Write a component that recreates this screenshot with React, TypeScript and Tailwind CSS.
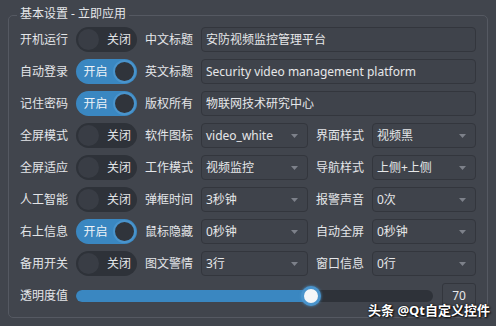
type Cell = { label: string; value: string };

type Row = {
  label: string;
  on: boolean;
  second: Cell;
  third?: Cell;
};

const rows: Row[] = [
  { label: "开机运行", on: false, second: { label: "中文标题", value: "安防视频监控管理平台" } },
  { label: "自动登录", on: true, second: { label: "英文标题", value: "Security video management platform" } },
  { label: "记住密码", on: true, second: { label: "版权所有", value: "物联网技术研究中心" } },
  {
    label: "全屏模式",
    on: false,
    second: { label: "软件图标", value: "video_white" },
    third: { label: "界面样式", value: "视频黑" },
  },
  {
    label: "全屏适应",
    on: false,
    second: { label: "工作模式", value: "视频监控" },
    third: { label: "导航样式", value: "上侧+上侧" },
  },
  {
    label: "人工智能",
    on: false,
    second: { label: "弹框时间", value: "3秒钟" },
    third: { label: "报警声音", value: "0次" },
  },
  {
    label: "右上信息",
    on: true,
    second: { label: "鼠标隐藏", value: "0秒钟" },
    third: { label: "自动全屏", value: "0秒钟" },
  },
  {
    label: "备用开关",
    on: false,
    second: { label: "图文警情", value: "3行" },
    third: { label: "窗口信息", value: "0行" },
  },
];

const Switch = ({ on }: { on: boolean }) => {
  if (on) {
    return (
      <div className="flex items-center h-[25px] rounded-full bg-[#3a87c1] pr-[1px]">
        <span className="flex-1 text-center pl-[2px] text-[#eef3f8]">开启</span>
        <div className="w-[23px] h-[23px] rounded-full bg-[#30343b] border-2 border-[#4a94cc]" />
      </div>
    );
  }
  return (
    <div className="flex items-center h-[25px] rounded-full bg-[#2e3239] pl-[2px]">
      <div className="w-[21px] h-[21px] rounded-full bg-[#393d45]" />
      <span className="flex-1 text-center pl-[2px] text-[#e4e6e9]">关闭</span>
    </div>
  );
};

const Field = ({ value }: { value: string }) => (
  <div className="flex items-center h-[25px] rounded-[4px] border border-[#33363d] bg-[#3f434b] px-[4px] text-[#e6e7e9] whitespace-nowrap overflow-hidden">
    {value}
  </div>
);

const Combo = ({ value }: { value: string }) => (
  <div className="flex items-center h-[25px] rounded-[4px] border border-[#33363d] bg-[#3f434b] pl-[4px] pr-[9px] text-[#e6e7e9] whitespace-nowrap">
    <span className="flex-1">{value}</span>
    <svg width="7" height="4" viewBox="0 0 7 4">
      <polygon points="0,0 7,0 3.5,4" fill="#7d818a" />
    </svg>
  </div>
);

const Label = ({ text }: { text: string }) => (
  <span className="text-[#e4e6e9] whitespace-nowrap">{text}</span>
);

export default function App() {
  const value = 70;

  return (
    <div className="relative w-[496px] h-[326px] bg-[#41454d] pt-[15px] text-[12px] leading-none font-['Noto_Sans','Noto_Sans_CJK_SC',sans-serif] overflow-hidden">
      <div className="relative mx-2 rounded-[5px] border border-[#555962] px-[11px] pt-[11px] pb-[9px]">
        <span className="absolute -top-[8px] left-[8px] bg-[#41454d] px-[3px] text-[#e4e6e9]">
          基本设置 - 立即应用
        </span>
        <div className="grid grid-cols-[48px_61px_48px_107px_48px_1fr] gap-x-2 gap-y-[7px] items-center">
          {rows.map((row) => (
            <div key={row.label} className="contents">
              <Label text={row.label} />
              <Switch on={row.on} />
              <Label text={row.second.label} />
              {row.third ? (
                <>
                  <Combo value={row.second.value} />
                  <Label text={row.third.label} />
                  <Combo value={row.third.value} />
                </>
              ) : (
                <div className="col-span-3">
                  <Field value={row.second.value} />
                </div>
              )}
            </div>
          ))}
          <Label text="透明度值" />
          <div className="col-span-5 flex items-center gap-[9px]">
            <div className="flex-1 flex items-center h-[12px] rounded-full bg-[#2e3239]">
              <div
                className="h-full rounded-full bg-[#3a87c1]"
                style={{ width: `calc(${value}% - 15px)` }}
              />
              <div className="-ml-[10px] w-[20px] h-[20px] rounded-full bg-[#f4f6f8] border-[3px] border-[#4a94cc] shadow-[0_0_3px_#4a94cc]" />
            </div>
            <div className="flex items-center justify-center w-[34px] h-[25px] rounded-[3px] border border-[#33363d] text-[#e6e7e9]">
              {value}
            </div>
          </div>
        </div>
      </div>
      <span className="absolute left-[368px] top-[304px] text-[13px] text-white font-bold [text-shadow:0_0_2px_#000,1px_1px_2px_#000]">
        头条 @Qt自定义控件
      </span>
    </div>
  );
}
